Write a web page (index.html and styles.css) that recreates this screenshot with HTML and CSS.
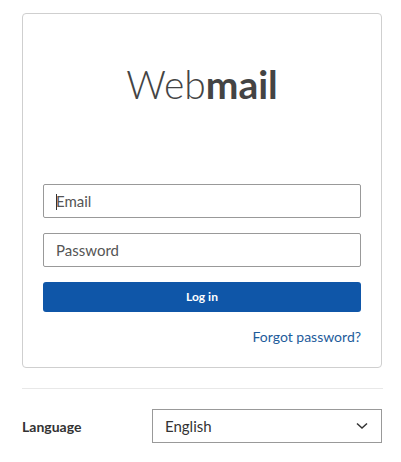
FILE: index.html
```html
<!DOCTYPE html>
<html lang="en">
<head>
<meta charset="utf-8">
<title>Webmail</title>
<link rel="stylesheet" href="styles.css">
</head>
<body>
<div class="page">
  <div class="card">
    <h1 class="logo"><span class="light">Web</span><span class="bold">mail</span></h1>
    <form class="form">
      <div class="field"><span class="caret"></span><span class="placeholder">Email</span></div>
      <div class="field"><span class="placeholder">Password</span></div>
      <button type="button" class="btn">Log in</button>
      <div class="forgot"><a href="#">Forgot password?</a></div>
    </form>
  </div>
  <hr class="sep">
  <div class="lang">
    <span class="lang-label">Language</span>
    <div class="select">
      <span>English</span>
      <svg class="chev" width="12" height="8" viewBox="0 0 12 8"><path d="M1 1.5 L6 6 L11 1.5" fill="none" stroke="#333" stroke-width="1.5"/></svg>
    </div>
  </div>
</div>
</body>
</html>
```

FILE: styles.css
```css
* { box-sizing: border-box; }
html, body { margin: 0; padding: 0; background: #fff; }
body { font-family: Lato, "Noto Sans", sans-serif; color: #333; }
.page { width: 360px; margin-left: 22px; padding-top: 13px; }
.card {
  border: 1px solid #cfcfcf;
  border-radius: 4px;
  padding: 0 20px 22px;
}
.logo {
  margin: 0;
  padding-top: 45px;
  height: 170px;
  text-align: center;
  font-size: 39px;
  line-height: 50px;
  color: #444;
  letter-spacing: 0;
}
.light { font-weight: 300; }
.bold { font-weight: 700; }
.form { display: flex; flex-direction: column; }
.field {
  height: 34px;
  border: 1px solid #999;
  border-radius: 2px;
  display: flex;
  align-items: center;
  padding-left: 12px;
  margin-bottom: 15px;
  font-size: 15px;
  color: #555;
  position: relative;
}
.caret {
  position: absolute;
  left: 12px;
  top: 9px;
  width: 1px;
  height: 16px;
  background: #333;
}
.btn {
  height: 30px;
  border: none;
  border-radius: 3px;
  background: #0f56a8;
  color: #fff;
  font-family: Lato, sans-serif;
  font-weight: 700;
  font-size: 12px;
  padding: 0 0 1px;
}
.forgot { text-align: right; margin-top: 16px; font-size: 14px; line-height: 17px; }
.forgot a { color: #1e5c9b; text-decoration: none; }
.sep { border: none; border-top: 1px solid #e8e8e8; margin: 20px 0 0; width: 361px; }
.lang { display: flex; align-items: center; margin-top: 20px; }
.lang-label { font-weight: 700; font-size: 14px; color: #333; width: 130px; }
.select {
  width: 230px;
  height: 34px;
  border: 1px solid #999;
  display: flex;
  align-items: center;
  justify-content: space-between;
  padding: 0 13px 0 12px;
  font-size: 15px;
  color: #333;
}
```
